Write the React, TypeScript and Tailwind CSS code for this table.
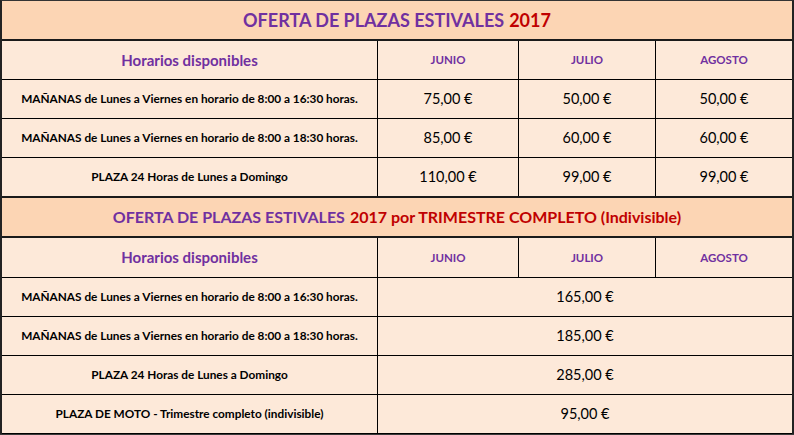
const purple = 'text-[#7030a0]';
const red = 'text-[#c00000]';

const monthly = [
  { label: 'MAÑANAS de Lunes a Viernes en horario de 8:00 a 16:30 horas.', prices: ['75,00 €', '50,00 €', '50,00 €'] },
  { label: 'MAÑANAS de Lunes a Viernes en horario de 8:00 a 18:30 horas.', prices: ['85,00 €', '60,00 €', '60,00 €'] },
  { label: 'PLAZA 24 Horas de Lunes a Domingo', prices: ['110,00 €', '99,00 €', '99,00 €'] },
];

const quarterly = [
  { label: 'MAÑANAS de Lunes a Viernes en horario de 8:00 a 16:30 horas.', price: '165,00 €' },
  { label: 'MAÑANAS de Lunes a Viernes en horario de 8:00 a 18:30 horas.', price: '185,00 €' },
  { label: 'PLAZA 24 Horas de Lunes a Domingo', price: '285,00 €' },
  { label: 'PLAZA DE MOTO - Trimestre completo (indivisible)', price: '95,00 €' },
];

function Title({ children, big }: { children: React.ReactNode; big?: boolean }) {
  return (
    <div
      className={`h-[40px] flex items-center justify-center bg-[#fcd5b4] border-b-2 border-[#1a1a1a] font-bold ${
        big ? 'text-[18px]' : 'text-[16px]'
      }`}
    >
      {children}
    </div>
  );
}

function Header({ tall }: { tall?: boolean }) {
  return (
    <div
      className={`grid grid-cols-[376px_141px_137px_136px] ${tall ? 'h-[40px]' : 'h-[39px]'} border-b border-black bg-[#fde9d9] font-bold`}
    >
      <div className={`flex items-center justify-center border-r border-black text-[15px] ${purple}`}>Horarios disponibles</div>
      {['JUNIO', 'JULIO', 'AGOSTO'].map((m, i) => (
        <div
          key={m}
          className={`flex items-center justify-center text-[11.5px] ${purple} ${i < 2 ? 'border-r border-black' : ''}`}
        >
          {m}
        </div>
      ))}
    </div>
  );
}

export default function App() {
  return (
    <div className="w-[794px] h-[435px] bg-[#3a3a3a] font-['Lato',sans-serif] text-black">
      <div className="border-t border-[#333] border-x-2 border-x-[#222]">
        <Title big>
          <span className={purple}>OFERTA DE PLAZAS ESTIVALES</span>
          <span className={`${red} ml-[5px]`}>2017</span>
        </Title>
        <Header />
        {monthly.map((r, idx) => {
          const last = idx === monthly.length - 1;
          return (
            <div
              key={r.label}
              className={`grid grid-cols-[376px_141px_137px_136px] bg-[#fde9d9] ${
                last ? 'h-[40px] border-b-2 border-[#1a1a1a]' : 'h-[39px] border-b border-black'
              }`}
            >
              <div className="flex items-center justify-center border-r border-black text-[11.8px] font-bold">{r.label}</div>
              {r.prices.map((p, i) => (
                <div
                  key={i}
                  className={`flex items-center justify-center text-[14.5px] ${i < 2 ? 'border-r border-black' : ''}`}
                >
                  {p}
                </div>
              ))}
            </div>
          );
        })}
        <Title>
          <span className={purple}>OFERTA DE PLAZAS ESTIVALES</span>
          <span className={`${red} ml-[5px]`}>2017 por TRIMESTRE COMPLETO (Indivisible)</span>
        </Title>
        <Header tall />
        {quarterly.map((r) => (
          <div
            key={r.label}
            className="grid grid-cols-[376px_414px] h-[39px] bg-[#fde9d9] border-b border-black"
          >
            <div className="flex items-center justify-center border-r border-black text-[11.8px] font-bold">{r.label}</div>
            <div className="flex items-center justify-center text-[14.5px]">{r.price}</div>
          </div>
        ))}
      </div>
    </div>
  );
}
